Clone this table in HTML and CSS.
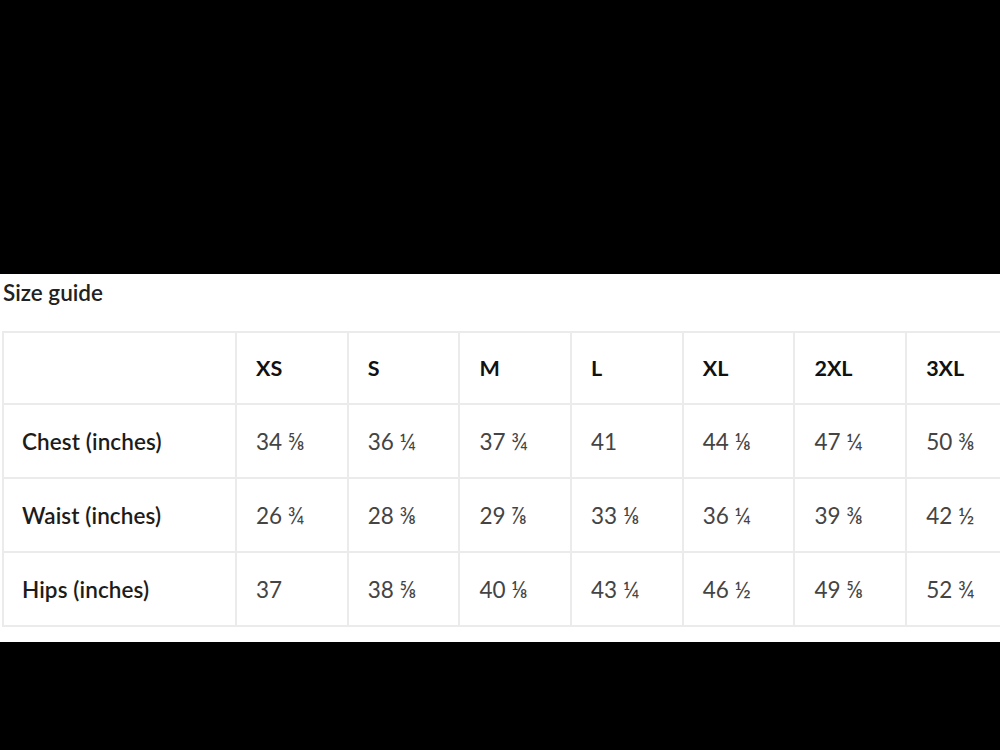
FILE: index.html
```html
<!DOCTYPE html>
<html lang="en">
<head>
<meta charset="utf-8">
<title>Size guide</title>
<link rel="stylesheet" href="styles.css">
</head>
<body>
<div class="top-band"></div>
<section class="guide">
  <h2 class="guide-title">Size guide</h2>
  <table class="size-table">
    <colgroup>
      <col class="col-label">
      <col class="col-size"><col class="col-size"><col class="col-size"><col class="col-size"><col class="col-size"><col class="col-size"><col class="col-size">
    </colgroup>
    <thead>
      <tr class="head-row">
        <th></th><th>XS</th><th>S</th><th>M</th><th>L</th><th>XL</th><th>2XL</th><th>3XL</th>
      </tr>
    </thead>
    <tbody>
      <tr>
        <th class="row-label">Chest (inches)</th>
        <td>34 ⅝</td><td>36 ¼</td><td>37 ¾</td><td>41</td><td>44 ⅛</td><td>47 ¼</td><td>50 ⅜</td>
      </tr>
      <tr>
        <th class="row-label">Waist (inches)</th>
        <td>26 ¾</td><td>28 ⅜</td><td>29 ⅞</td><td>33 ⅛</td><td>36 ¼</td><td>39 ⅜</td><td>42 ½</td>
      </tr>
      <tr>
        <th class="row-label">Hips (inches)</th>
        <td>37</td><td>38 ⅝</td><td>40 ⅛</td><td>43 ¼</td><td>46 ½</td><td>49 ⅝</td><td>52 ¾</td>
      </tr>
    </tbody>
  </table>
</section>
<div class="bottom-band"></div>
</body>
</html>
```
FILE: styles.css
```css
html, body {
  margin: 0;
  padding: 0;
  background: #000;
  width: 1000px;
  height: 750px;
  overflow: hidden;
}

.top-band {
  height: 274px;
  background: #000;
}

.guide {
  background: #fff;
  height: 368px;
  overflow: hidden;
  padding-left: 2px;
  box-sizing: border-box;
  font-family: Lato, "Noto Sans", sans-serif;
}

.guide-title {
  margin: 0;
  padding-top: 4px;
  padding-left: 1px;
  height: 53px;
  font-size: 22.5px;
  line-height: 30px;
  font-weight: 600;
  color: #222;
}

.size-table {
  border-collapse: separate;
  border-spacing: 0;
  table-layout: fixed;
  width: 1016px;
  border-top: 2px solid #ebebeb;
  border-left: 2px solid #ebebeb;
}

.col-label { width: 233px; }
.col-size { width: 111.7px; }

.size-table th,
.size-table td {
  border-right: 2px solid #ebebeb;
  border-bottom: 2px solid #ebebeb;
  padding: 0 0 0 19px;
  text-align: left;
  vertical-align: middle;
  font-size: 22.5px;
  white-space: nowrap;
  height: 74px;
  box-sizing: border-box;
}

.head-row th {
  height: 72px;
  font-size: 21.5px;
  font-weight: 700;
  color: #111;
}

.size-table .row-label {
  font-weight: 600;
  color: #1c1c1c;
  padding-left: 18px;
  letter-spacing: 0.1px;
}

.size-table td {
  color: #444;
  font-weight: 400;
}

.bottom-band {
  height: 108px;
  background: #000;
}
```
